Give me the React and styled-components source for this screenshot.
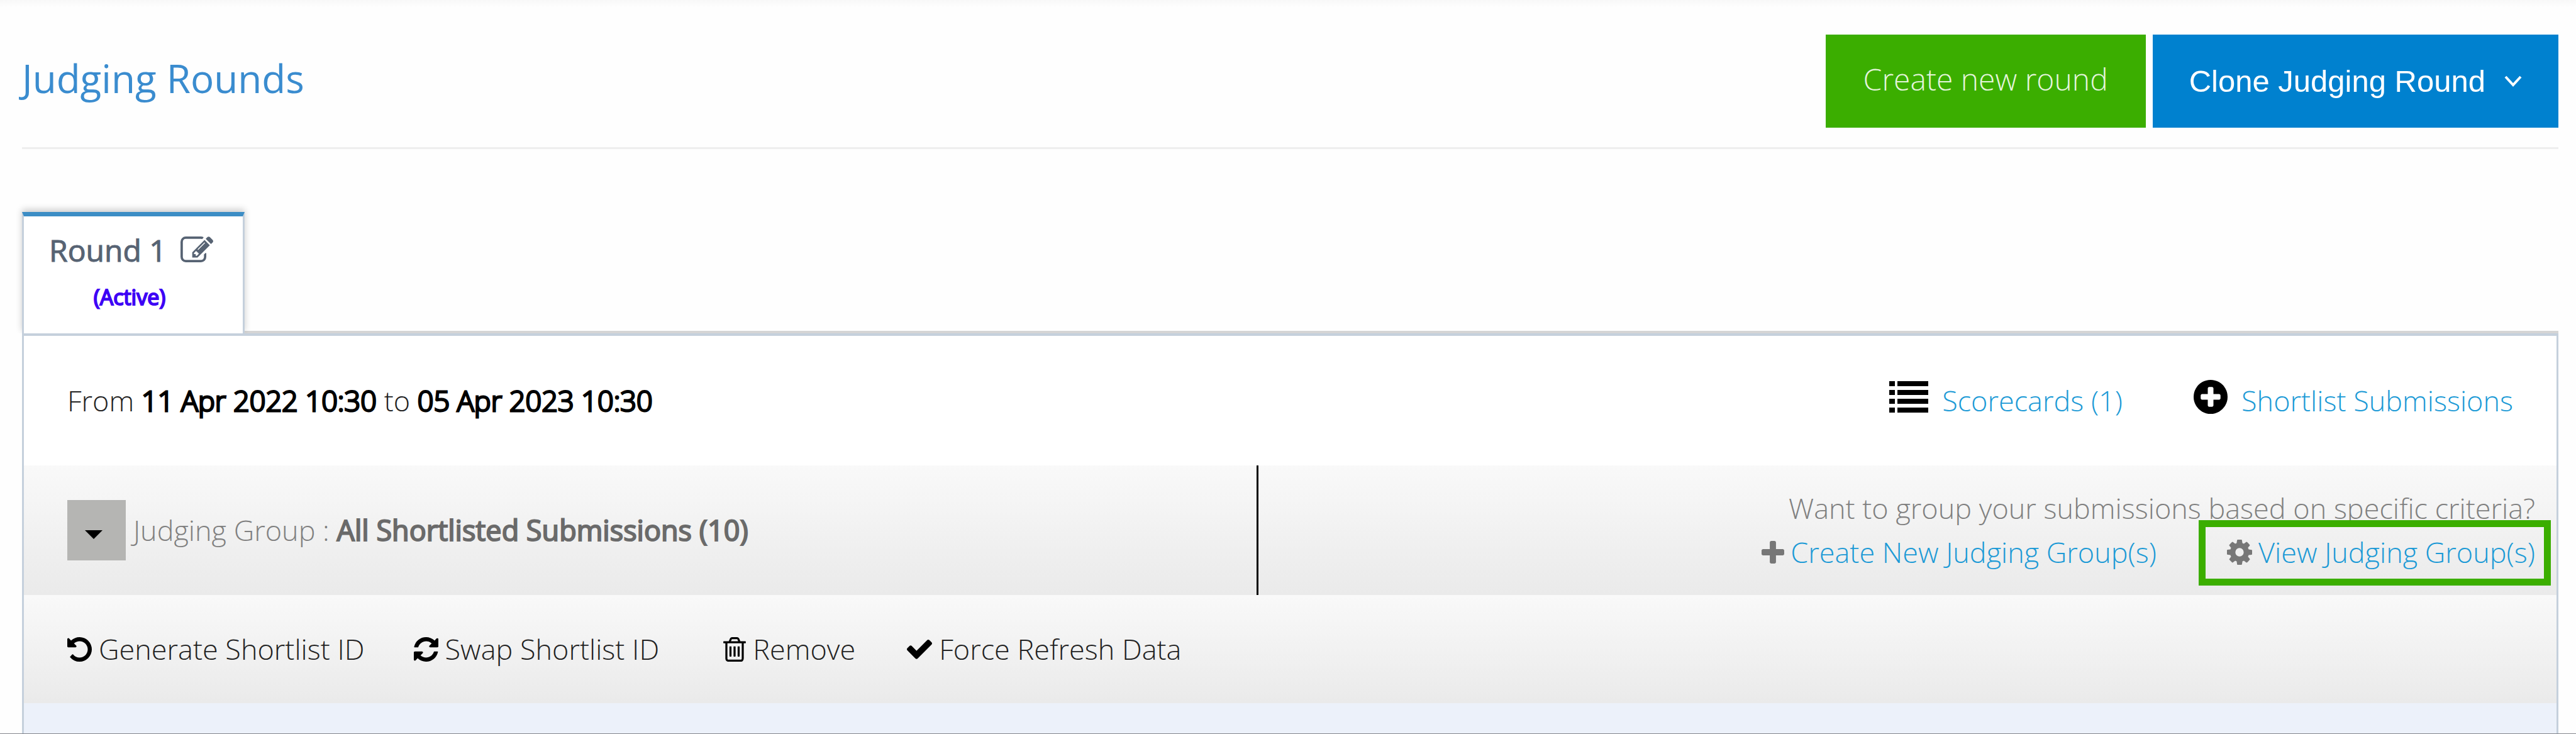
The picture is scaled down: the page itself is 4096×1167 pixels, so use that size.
import React from 'react'
import styled, { createGlobalStyle } from 'styled-components'

const icons = {
    edit: {
        box: '0 128 1784 1408',
        d: 'M888 1184l116-116-152-152-116 116v56h96v96h56zm440-720q-16-16-33 1l-350 350q-17 17-1 33t33-1l350-350q17-17 1-33zm80 594v190q0 119-84.5 203.5t-203.5 84.5h-832q-119 0-203.5-84.5t-84.5-203.5v-832q0-119 84.5-203.5t203.5-84.5h832q63 0 117 25 15 7 18 23 3 17-9 29l-49 49q-14 14-32 8-23-6-45-6h-832q-66 0-113 47t-47 113v832q0 66 47 113t113 47h832q66 0 113-47t47-113v-126q0-13 9-22l64-64q15-15 35-7t20 29zm-96-738l288 288-672 672h-288v-288zm444 132l-92 92-288-288 92-92q28-28 68-28t68 28l152 152q28 28 28 68t-28 68z',
    },
    list: {
        box: '0 0 62 52',
        d: 'M0 1h9v8H0zM13 1h49v8H13zM0 15h9v8H0zM13 15h49v8H13zM0 29h9v8H0zM13 29h49v8H13zM0 43h9v8H0zM13 43h49v8H13z',
    },
    plusCircle: {
        box: '128 128 1536 1536',
        d: 'M1344 960v-128q0-26-19-45t-45-19h-256v-256q0-26-19-45t-45-19h-128q-26 0-45 19t-19 45v256h-256q-26 0-45 19t-19 45v128q0 26 19 45t45 19h256v256q0 26 19 45t45 19h128q26 0 45-19t19-45v-256h256q26 0 45-19t19-45zm320-64q0 209-103 385.5t-279.5 279.5-385.5 103-385.5-103-279.5-279.5-103-385.5 103-385.5 279.5-279.5 385.5-103 385.5 103 279.5 279.5 103 385.5z',
    },
    plus: {
        box: '192 128 1408 1408',
        d: 'M1600 736v192q0 40-28 68t-68 28h-416v416q0 40-28 68t-68 28h-192q-40 0-68-28t-28-68v-416h-416q-40 0-68-28t-28-68v-192q0-40 28-68t68-28h416v-416q0-40 28-68t68-28h192q40 0 68 28t28 68v416h416q40 0 68 28t28 68z',
    },
    cog: {
        box: '128 128 1536 1536',
        d: 'M1152 896q0-106-75-181t-181-75-181 75-75 181 75 181 181 75 181-75 75-181zm512-109v222q0 12-8 23t-20 13l-185 28q-19 54-39 91 35 50 107 138 10 12 10 25t-9 23q-27 37-99 108t-94 71q-12 0-26-9l-138-108q-44 23-91 38-16 136-29 186-7 28-36 28h-222q-14 0-24.5-8.5t-11.5-21.5l-28-184q-49-16-90-37l-141 107q-10 9-25 9-14 0-25-11-126-114-165-168-7-10-7-23 0-12 8-23 15-21 51-66.5t54-70.5q-27-50-41-99l-183-27q-13-2-21-12.5t-8-23.5v-222q0-12 8-23t19-13l186-28q14-46 39-92-40-57-107-138-10-12-10-24 0-10 9-23 26-36 98.5-107.5t94.5-71.5q13 0 26 10l138 107q44-23 91-38 16-136 29-186 7-28 36-28h222q14 0 24.5 8.5t11.5 21.5l28 184q49 16 90 37l142-107q9-9 24-9 13 0 25 10 129 119 165 170 7 8 7 22 0 12-8 23-15 21-51 66.5t-54 70.5q26 50 41 98l183 28q13 2 21 12.5t8 23.5z',
    },
    undo: {
        box: '128 128 1536 1536',
        d: 'M1664 896q0 156-61 298t-164 245-245 164-298 61q-172 0-327-72.5t-264-204.5q-7-10-6.5-22.5t8.5-20.5l137-138q10-9 25-9 16 2 23 12 73 95 179 147t225 52q104 0 198.5-40.5t163.5-109.5 109.5-163.5 40.5-198.5-40.5-198.5-109.5-163.5-163.5-109.5-198.5-40.5q-98 0-188 35.5t-160 101.5l137 138q31 30 14 69-17 40-59 40h-448q-26 0-45-19t-19-45v-448q0-42 40-59 39-17 69 14l130 129q107-101 244.5-156.5t284.5-55.5q156 0 298 61t245 164 164 245 61 298z',
    },
    refresh: {
        box: '128 128 1536 1536',
        d: 'M1639 1056q0 5-1 7-64 268-268 434.5t-478 166.5q-146 0-282.5-55t-243.5-157l-129 129q-19 19-45 19t-45-19-19-45v-448q0-26 19-45t45-19h448q26 0 45 19t19 45-19 45l-137 137q71 66 161 102t187 36q134 0 250-65t186-179q11-17 53-117 8-23 30-23h192q13 0 22.5 9.5t9.5 22.5zm25-800v448q0 26-19 45t-45 19h-448q-26 0-45-19t-19-45 19-45l138-138q-148-137-349-137-134 0-250 65t-186 179q-11 17-53 117-8 23-30 23h-199q-13 0-22.5-9.5t-9.5-22.5v-7q65-268 270-434.5t480-166.5q146 0 284 55.5t245 156.5l130-129q19-19 45-19t45 19 19 45z',
    },
    trash: {
        box: '192 128 1408 1536',
        d: 'M704 736v576q0 14-9 23t-23 9h-64q-14 0-23-9t-9-23v-576q0-14 9-23t23-9h64q14 0 23 9t9 23zm256 0v576q0 14-9 23t-23 9h-64q-14 0-23-9t-9-23v-576q0-14 9-23t23-9h64q14 0 23 9t9 23zm256 0v576q0 14-9 23t-23 9h-64q-14 0-23-9t-9-23v-576q0-14 9-23t23-9h64q14 0 23 9t9 23zm128 724v-948h-896v948q0 22 7 40.5t14.5 27 10.5 8.5h832q3 0 10.5-8.5t14.5-27 7-40.5zm-672-1076h448l-48-117q-7-9-17-11h-317q-10 2-17 11zm928 32v64q0 14-9 23t-23 9h-96v948q0 83-47 143.5t-113 60.5h-832q-66 0-113-58.5t-47-141.5v-952h-96q-14 0-23-9t-9-23v-64q0-14 9-23t23-9h309l70-167q15-37 54-63t79-26h320q40 0 79 26t54 63l70 167h309q14 0 23 9t9 23z',
    },
    check: {
        box: '121 340 1550 1188',
        d: 'M1671 566q0 40-28 68l-724 724-136 136q-28 28-68 28t-68-28l-136-136-362-362q-28-28-28-68t28-68l136-136q28-28 68-28t68 28l294 295 656-657q28-28 68-28t68 28l136 136q28 28 28 68z',
    },
    caret: {
        box: '0 0 28 14',
        d: 'M0 0h28l-14 14z',
    },
}

function Icon({ name, width, height }) {
    return (
        <Svg viewBox={icons[name].box} width={width} height={height} aria-hidden="true">
            <path d={icons[name].d} />
        </Svg>
    )
}

function App() {
    return (
        <>
            <GlobalStyle />
            <Page>
                <Header>
                    <Title>Judging Rounds</Title>
                    <Buttons>
                        <CreateButton type="button">Create new round</CreateButton>
                        <CloneButton type="button">
                            Clone Judging Round
                            <Chevron viewBox="0 0 28 18" width="28" height="18" aria-hidden="true">
                                <path d="M2 2l12 13L26 2" />
                            </Chevron>
                        </CloneButton>
                    </Buttons>
                </Header>

                <Tabs>
                    <Tab href="#round-1">
                        <TabName>
                            Round 1
                            <Icon name="edit" width={52} height={41} />
                        </TabName>
                        <Status>(Active)</Status>
                    </Tab>
                </Tabs>

                <Panel>
                    <DateRow>
                        <p>
                            From <Strong>11 Apr 2022 10:30</Strong> to <Strong>05 Apr 2023 10:30</Strong>
                        </p>
                        <Shortcuts>
                            <Shortcut>
                                <Icon name="list" width={62} height={52} />
                                <Link href="#scorecards">Scorecards (1)</Link>
                            </Shortcut>
                            <Shortcut>
                                <Icon name="plusCircle" width={54} height={54} />
                                <Link href="#shortlist">Shortlist Submissions</Link>
                            </Shortcut>
                        </Shortcuts>
                    </DateRow>

                    <GroupRow>
                        <Group>
                            <Toggle type="button" aria-label="Toggle group">
                                <Icon name="caret" width={28} height={14} />
                            </Toggle>
                            <p>
                                Judging Group : <GroupName>All Shortlisted Submissions (10)</GroupName>
                            </p>
                        </Group>
                        <GroupHelp>
                            <p>Want to group your submissions based on specific criteria?</p>
                            <HelpLinks>
                                <HelpLink>
                                    <Icon name="plus" width={36} height={36} />
                                    <Link href="#create">Create New Judging Group(s)</Link>
                                </HelpLink>
                                <HelpLink>
                                    <Icon name="cog" width={40} height={40} />
                                    <Link href="#view">View Judging Group(s)</Link>
                                    <Highlight />
                                </HelpLink>
                            </HelpLinks>
                        </GroupHelp>
                    </GroupRow>

                    <Actions>
                        <Action type="button" $gap="78px">
                            <Icon name="undo" width={39} height={39} />
                            Generate Shortlist ID
                        </Action>
                        <Action type="button" $gap="102px">
                            <Icon name="refresh" width={39} height={39} />
                            Swap Shortlist ID
                        </Action>
                        <Action type="button" $gap="82px">
                            <Icon name="trash" width={36} height={39} />
                            Remove
                        </Action>
                        <Action type="button">
                            <Icon name="check" width={40} height={31} />
                            Force Refresh Data
                        </Action>
                    </Actions>
                    <Footer />
                </Panel>
            </Page>
        </>
    )
}

export default App


const GlobalStyle = createGlobalStyle`
    * {
        box-sizing: border-box;
    }

    body {
        margin: 0;
        background: #fefefe;
        color: #222;
        font-family: "Open Sans", sans-serif;
        font-size: 45px;
        font-weight: 300;
        line-height: 70px;
    }

    p, h1 {
        margin: 0;
    }

    button {
        font: inherit;
        border: none;
        cursor: pointer;
    }
`

const Page = styled.main`
    min-height: 100vh;
    padding: 0 28px 0 35px;
    display: flex;
    flex-direction: column;
    border-bottom: 1px solid #84868c;
    background: linear-gradient(#f8f8f8, #fefefe 12px);
`

const Svg = styled.svg`
    fill: currentColor;
    flex: none;
`

const Header = styled.header`
    display: flex;
    justify-content: space-between;
    align-items: flex-start;
    height: 237px;
    padding-top: 55px;
    border-bottom: 3px solid #eee;
`

const Title = styled.h1`
    color: #3a8ccf;
    font-size: 62px;
    font-weight: 400;
    line-height: 138px;
`

const Buttons = styled.div`
    display: flex;
    gap: 11px;
`

const CreateButton = styled.button`
    height: 148px;
    padding: 0 60px 6px;
    background: #3bae00;
    color: #e4f5dc;
    font-size: 48px;
`

const CloneButton = styled(CreateButton)`
    display: flex;
    align-items: center;
    gap: 30px;
    padding: 0 58px;
    background: #0081cf;
    color: #fff;
    font-family: "Liberation Sans", sans-serif;
    font-size: 49px;
    font-weight: 400;
`

const Chevron = styled.svg`
    fill: none;
    stroke: #fff;
    stroke-width: 4;
`

const Tabs = styled.nav`
    display: flex;
    margin-top: 100px;
    border-bottom: 4px solid #d5d5d5;
`

const Tab = styled.a`
    width: 354px;
    height: 193px;
    margin-bottom: -4px;
    padding-top: 19px;
    border: 3px solid #c5d0dc;
    border-top: 7px solid #3c8dc5;
    border-bottom: none;
    background: #fff;
    box-shadow: 0 -4px 10px rgba(0, 0, 0, 0.2);
    clip-path: inset(-20px -20px 0 -20px);
    text-align: center;
    text-decoration: none;
`

const TabName = styled.span`
    display: flex;
    align-items: center;
    gap: 22px;
    padding-left: 40px;
    color: #576373;
    font-size: 48px;
    font-weight: 400;
    -webkit-text-stroke: 1px;

    svg {
        margin-bottom: 4px;
    }
`

const Status = styled.span`
    display: block;
    margin-top: 4px;
    padding-right: 12px;
    color: #3d00f5;
    font-size: 34px;
    font-weight: 400;
    -webkit-text-stroke: 2px;
`

const Panel = styled.section`
    flex: 1;
    display: flex;
    flex-direction: column;
    border: 3px solid #c5d0dc;
    border-top-width: 4px;
    border-bottom: none;
    background: #fff;
`

const DateRow = styled.div`
    display: flex;
    align-items: center;
    justify-content: space-between;
    height: 206px;
    padding: 0 69px;
`

/* the light face made bold by a stroke, so it keeps its narrow widths */
const Strong = styled.b`
    color: #000;
    font-weight: 300;
    -webkit-text-stroke: 3px;
`

const Shortcuts = styled.div`
    display: flex;
    gap: 113px;
`

const Shortcut = styled.div`
    display: flex;
    align-items: center;
    gap: 22px;
    color: #000;

    svg {
        margin-bottom: 12px;
    }
`

const Link = styled.a`
    color: #1c9ad6;
    text-decoration: none;
`

const GroupRow = styled.div`
    display: flex;
    height: 206px;
    background: linear-gradient(#f9f9f9, #eaeaea);
    color: #808080;
`

const Group = styled.div`
    display: flex;
    align-items: center;
    gap: 12px;
    width: calc(50% - 51px);
    padding-left: 69px;
    border-right: 3px solid #000;
`

const Toggle = styled.button`
    display: flex;
    align-items: center;
    justify-content: center;
    width: 93px;
    height: 96px;
    padding: 14px 10px 0 0;
    background: #b5b5b3;
    color: #000;
`

const GroupName = styled.b`
    color: #6a6a6a;
    font-weight: 400;
    -webkit-text-stroke: 2px;
`

const GroupHelp = styled.div`
    flex: 1;
    padding: 33px 34px 0 0;
    text-align: right;
`

const HelpLinks = styled.div`
    display: flex;
    justify-content: flex-end;
    gap: 112px;
`

const HelpLink = styled.div`
    position: relative;
    display: flex;
    align-items: center;
    gap: 10px;
    color: #777;
`

/* green frame that lies over the link and the line above it */
const Highlight = styled.span`
    position: absolute;
    inset: -16px -25px -18px -45px;
    border: 11px solid #3bae00;
`

const Actions = styled.div`
    display: flex;
    align-items: center;
    height: 172px;
    padding-left: 69px;
    background: linear-gradient(#f9f9f9, #eaeaea);
`

const Action = styled.button`
    display: flex;
    align-items: center;
    gap: 11px;
    margin-right: ${({ $gap }) => $gap || 0};
    padding: 0;
    background: none;
    color: #222;

    svg {
        color: #000;
    }
`

const Footer = styled.footer`
    flex: 1;
    background: #ecf1fa;
`
